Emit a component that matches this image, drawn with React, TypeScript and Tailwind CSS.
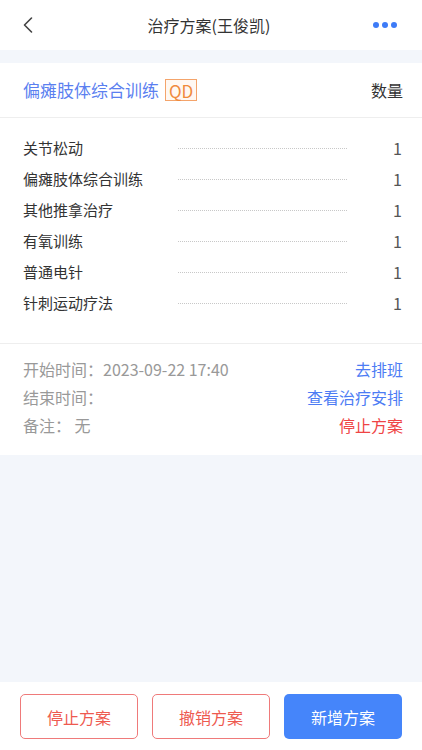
import { ChevronLeft } from 'lucide-react';

const items = ['关节松动', '偏瘫肢体综合训练', '其他推拿治疗', '有氧训练', '普通电针', '针刺运动疗法'];

export default function App() {
  return (
    <div
      className="w-[422px] h-[750px] flex flex-col bg-[#f3f6fb] text-[#333]"
      style={{ fontFamily: '"Noto Sans CJK SC", "Noto Sans", sans-serif' }}
    >
      {/* Header */}
      <div className="h-[50px] bg-white flex items-center justify-between pl-[14px] pr-[25px]">
        <ChevronLeft className="w-[28px] h-[28px] text-[#444]" strokeWidth={1.4} />
        <h1 className="text-[16px] text-[#333] ml-[3px]">治疗方案(王俊凯)</h1>
        <div className="flex items-center gap-[3px]">
          <span className="w-[6px] h-[6px] rounded-full bg-[#3d7bf7]" />
          <span className="w-[6px] h-[6px] rounded-full bg-[#3d7bf7]" />
          <span className="w-[6px] h-[6px] rounded-full bg-[#3d7bf7]" />
        </div>
      </div>

      {/* Plan card */}
      <div className="mt-[13px] bg-white">
        <div className="h-[55px] flex items-center justify-between pl-[23px] pr-[19px] border-b border-[#eeeeee]">
          <div className="flex items-center gap-[6px]">
            <span className="text-[17px] text-[#5b7ff0]">偏瘫肢体综合训练</span>
            <span className="h-[22px] px-[3px] flex items-center border border-[#f4a46b] bg-[#fff8f2] text-[#f08a3c] text-[17px] leading-none">
              QD
            </span>
          </div>
          <span className="text-[16px] text-[#333]">数量</span>
        </div>

        <div className="pt-[15px] pb-[24px] pl-[23px] pr-[20px] border-b border-[#eeeeee]">
          {items.map((name) => (
            <div key={name} className="h-[31px] flex items-center">
              <span className="w-[155px] text-[15px] text-[#333]">{name}</span>
              <div className="w-[169px] border-t border-dotted border-[#c8c8c8]" />
              <span className="flex-1 text-right text-[16px] leading-[20px] text-[#555] -mt-[2px]">1</span>
            </div>
          ))}
        </div>

        <div className="pt-[11px] pb-[16px] pl-[23px] pr-[19px] text-[16px]">
          <div className="h-[28px] flex items-center justify-between">
            <span className="text-[#999]">开始时间：2023-09-22 17:40</span>
            <span className="text-[#4d7cf4]">去排班</span>
          </div>
          <div className="h-[28px] flex items-center justify-between">
            <span className="text-[#999]">结束时间：</span>
            <span className="text-[#4d7cf4]">查看治疗安排</span>
          </div>
          <div className="h-[28px] flex items-center justify-between">
            <span className="text-[#999]">备注：&nbsp;无</span>
            <span className="text-[#ef4444]">停止方案</span>
          </div>
        </div>
      </div>

      <div className="flex-1" />

      {/* Bottom bar */}
      <div className="h-[68px] bg-white flex items-center gap-[14px] px-[20px] pt-[1px]">
        <button className="w-[118px] h-[45px] rounded-[5px] border border-[#ef7a7a] text-[#ee5a4f] text-[16px]">
          停止方案
        </button>
        <button className="w-[118px] h-[45px] rounded-[5px] border border-[#ef7a7a] text-[#ee5a4f] text-[16px]">
          撤销方案
        </button>
        <button className="w-[118px] h-[45px] rounded-[5px] bg-[#4585fa] text-white text-[16px]">
          新增方案
        </button>
      </div>
    </div>
  );
}
